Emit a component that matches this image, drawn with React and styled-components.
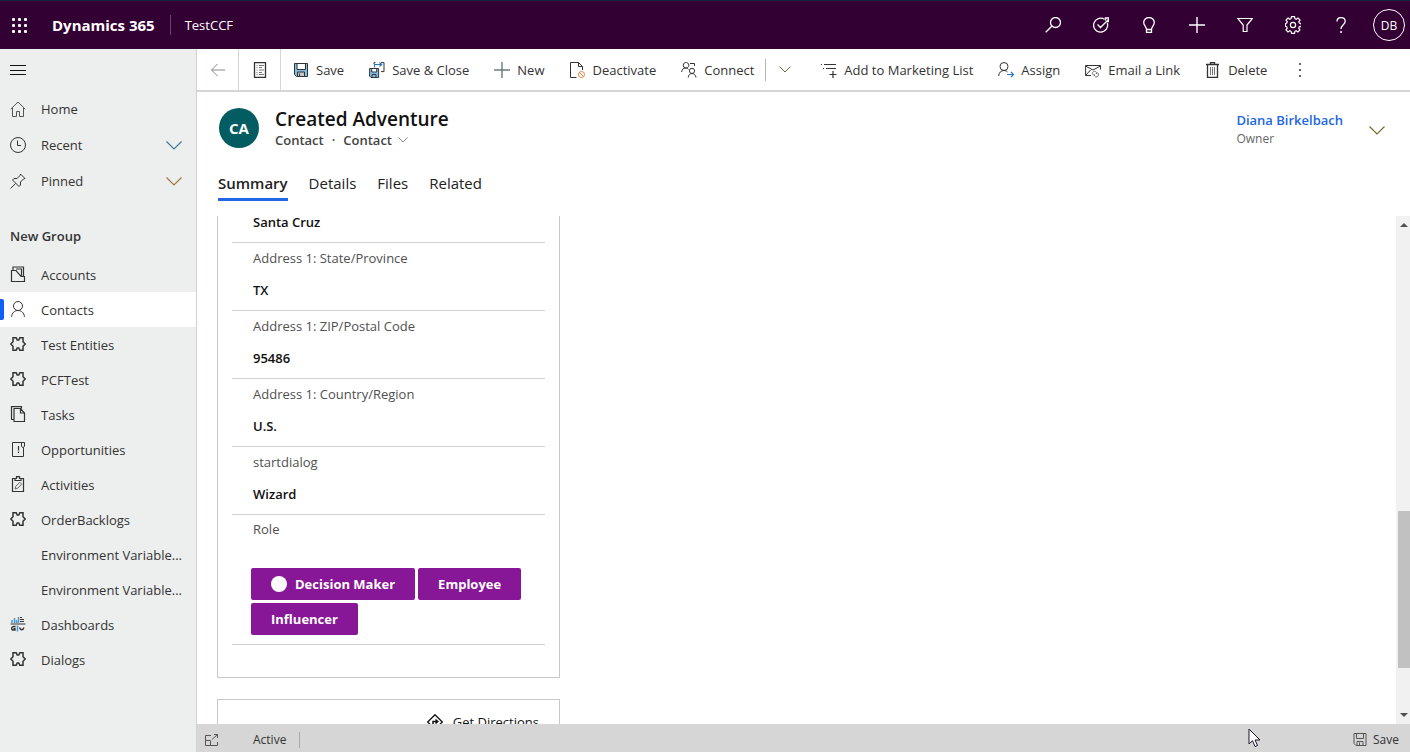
import React from 'react';
import styled, { createGlobalStyle, css } from 'styled-components';

const GlobalStyle = createGlobalStyle`
  *, *::before, *::after { box-sizing: border-box; }
  body { margin: 0; background: #fff; }
  body, button, input { font-family: "Open Sans", "Noto Sans", sans-serif; font-size: 13px; line-height: 20px; color: #333; }
  button { margin: 0; padding: 0; border: 0; background: none; cursor: pointer; white-space: nowrap; }
  a { color: inherit; text-decoration: none; }
  h1, h2, p, ul { margin: 0; padding: 0; }
`;

/* ---------- icons ---------- */

const Svg = styled.svg`
  display: block;
  flex: none;
  width: ${(p) => p.$w || 16}px;
  height: ${(p) => p.$h || 16}px;
  fill: none;
  stroke: currentColor;
  stroke-width: 1;
`;

function Icon({ name, w = 16, h = 16 }) {
  return (
    <Svg $w={w} $h={h} viewBox={`0 0 ${w} ${h}`} aria-hidden="true">
      {drawings[name]}
    </Svg>
  );
}

const floppy = (
  <>
    <path d="M1.5 1.5h13v13h-11l-2-2z" fill="#84bfe8" />
    <path d="M4 1.5h8.500v6H4z" fill="#fff" />
    <path d="M4.500 14.500v-4.500h7v4.500z" fill="#c8c8c8" />
    <path d="M6.500 11.500v3" />
  </>
);

const drawings = {
  waffle: (
    <g fill="#fff" stroke="none">
      {[0, 6, 12].map((y) => [0, 6, 12].map((x) => (
        <rect key={`${x}-${y}`} x={x + 1} y={y + 1} width="3" height="3" rx="1" />
      )))}
    </g>
  ),
  search: <><circle cx="10.500" cy="5.500" r="5" strokeWidth="1.300" /><path d="M7 9L.7 15.300" strokeWidth="1.300" /></>,
  target: <g strokeWidth="1.300"><path d="M11.500 2.300A7 7 0 1 0 14.300 6M4.500 7.500l3 3L15.500 2.500M12.500 3.500V1h3.500M13.500 4.500H16V1" /></g>,
  bulb: <g strokeWidth="1.300"><path d="M5.500 12.500C5.500 9.800 2.700 8.500 2.700 5.500a5.300 5 0 0 1 10.600 0c0 3-2.800 4.300-2.800 7zM5.500 12.500v3h5v-3" /></g>,
  plus: <path d="M8 0v16M0 8h16" strokeWidth="1.400" />,
  filter: <path d="M.8 1.500h14.600L10 8v6.500H6.200V8z" strokeWidth="1.200" />,
  gear: (
    <g strokeWidth="1.200">
      <path d="M6.500.700h3l.4 2 1.300.600 1.800-1.200 2 2-1.200 1.800.500 1.200 2 .500v2.800l-2 .400-.600 1.300 1.200 1.800-2 2-1.800-1.200-1.200.600-.400 2h-3l-.400-2-1.300-.600L3 15.900l-2-2 1.200-1.800-.500-1.300-1.200-.400V7.600l1.200-.500.600-1.200L1 4.100l2-2 1.800 1.200 1.200-.600z" />
      <circle cx="8" cy="9" r="2.600" />
    </g>
  ),
  help: <><path d="M4 4.500C4 2 5.500.700 8 .700s4.200 1.500 4.200 3.800C12.200 7.500 8 8.300 8 12" strokeWidth="1.300" /><circle cx="8" cy="15" r="1" fill="currentColor" stroke="none" /></>,
  menu: <path d="M0 3.500h16M0 8.500h16M0 12.500h16" stroke="#111" />,
  home: <path d="M.7 8.200L8 1l7.300 7.200M2.500 6.700v8.800h4v-5h3v5h4V6.700" stroke="#555" />,
  clock: <><circle cx="8" cy="8" r="7.500" /><path d="M7.500 3.500v5H11" /></>,
  pin: <path d="M10.500 1l4.500 4.500-1.500.500-3 3v3l-1.500 1.500-6.500-6.500L4 5.500h3l3-3zM5.500 10.500L.5 15.500" />,
  chevron: <path d="M.5.500l7.500 7.500L15.500.500" strokeWidth="1.200" />,
  chevronMid: <path d="M.5.500L6 6 11.500.500" />,
  chevronSmall: <path d="M.5.500L5 5 9.500.500" stroke="#888" />,
  accounts: <path d="M1.500 4.500v11h13v-5H11L6 4.500zM3 4.500V1h10.500v9.500M6 3h5.500v7.500" strokeWidth="1.200" />,
  contact: <path d="M8 9.500a4.500 4.500 0 1 0 0-9 4.500 4.500 0 0 0 0 9c-3.500 0-6 2.300-6.500 6.300M8 9.500c3.500 0 6 2.300 6.500 6.300" />,
  puzzle: <path d="M3 1.700h3.200l1 2.300h1.600l1-2.300H13v4.100L15.200 8 13 10.200v4.100H9.800l-1-2.300H7.200l-1 2.300H3v-4.100L.8 8 3 5.800z" strokeWidth="1.500" />,
  tasks: <path d="M4 13.500H1.500V.600h10v1.900M4 2.500h6.500l4 4.500v8.500H4zM10.500 2.500V7h4" strokeWidth="1.200" />,
  opportunities: <><path d="M11.500 1.500h-9v14h11v-9M11.500 1.500v3.500l1 1.500h1l1-1.500V1.500z" /><path d="M8.500 5v4.500M8.500 10.500V12" strokeWidth="1.200" /></>,
  activities: <><path d="M5 2.500H2.500v13h11v-13H11M5 4.500h6v-2H9.500V.600h-3v1.900H5z" strokeWidth="1.200" /><path d="M5 13l.800-2.700 4-4 1.900 1.900-4 4z" stroke="#666" /></>,
  dashboards: (
    <>
      <path d="M2 7V4M4.500 7V2M6.500 7V4M8.500 7V1M7.500 9.500V15.500" stroke="#4c94cc" strokeWidth="1.500" />
      <path d="M10 1.500h2M10 3.500h4M10 5.500h4M.5 8h15" />
      <path d="M5.500 10.500C2 10 .5 12.500 2.500 14H5v-1.500H3.500M9.500 11.500c1 3 3.500 3 4.500 0" strokeWidth="1.300" />
    </>
  ),
  back: <path d="M7.500 2L1.500 8l6 6M1.500 8H15" stroke="#888" />,
  form: <g><path d="M2.500.500h11v15h-11z" strokeWidth="1.300" /><path d="M4.500 3.500h1M7 3.500h5M4.500 5.500h1M7 5.500h3M4.500 8h1M7 8h5M4.500 10.500h1M7 10.500h3M4.500 12.500h1M7 12.500h5" stroke="#777" /></g>,
  save: floppy,
  saveClose: (
    <>
      <path d="M.6 6.500h9v9H2l-1.400-1.400z" fill="#84bfe8" />
      <path d="M2.700 6.500h5v3.500h-5z" fill="#fff" />
      <path d="M3 15.500v-3h4v3M5 2V.600H6.500M12 .600h3v9h-3" />
      <path d="M5.500 5.500v-3h7M10.500.500l2.200 2-2.200 2" stroke="#2e75b6" strokeWidth="1.200" />
    </>
  ),
  add: <path d="M8 0v16M0 8h16" stroke="#667d7d" strokeWidth="1.400" />,
  deactivate: (
    <>
      <path d="M7.500 15.500h-6V.500h8l4 4V8M9.500.500v4h4" />
      <circle cx="12.500" cy="12.500" r="3" stroke="#e0873a" /><path d="M10.500 10.500l4 4" stroke="#e0873a" />
    </>
  ),
  connect: <path d="M4.500 6a2.800 2.800 0 1 0 0-5.500 2.800 2.800 0 0 0 0 5.500c-2.300 0-3.500 1.500-3.900 4M4.500 6c1.400 0 2.300.5 3 1.500M11 11.500a2.600 2.600 0 1 0 0-5.200 2.600 2.600 0 0 0 0 5.200c-2.200 0-3.500 1.500-3.800 4M11 11.500c2.200 0 3.600 1.500 4 4M9 1.500h4.500V4" />,
  marketing: <path d="M0 2.500h1M3 2.500h12M2 6.500h1M5 6.500h10M12 9v7M8.500 12.500h7" strokeWidth="1.200" />,
  assign: <><path d="M6 8.500A4 4 0 1 0 6 .500a4 4 0 0 0 0 8c-3 0-5 2-5.400 5.500M6 8.500c1.500 0 2.600.5 3.500 1.500" /><path d="M9 12.500h6.500M13 10l2.500 2.500L13 15" stroke="#2e75b6" strokeWidth="1.200" /></>,
  email: (
    <>
      <path d="M6 13.500H.6v-10h14.900v4M.6 4l7.400 4L15.500 4M.6 13.500L5.500 8" />
      <path d="M9.500 13.500a2.200 2.200 0 0 1-1-4c1.500-.8 3.500.5 3 2.500M12 10.500a2.200 2.200 0 1 1-1.500 4.300c-1.200-.600-1.300-2-.5-3" stroke="#777" />
    </>
  ),
  trash: <g><path d="M1 2.500h13M5.500 2V.600h4V2M2.500 2.500v13h10v-13" strokeWidth="1.300" /><path d="M5.500 5v8M7.500 5v8M9.500 5v8" stroke="#777" /></g>,
  more: <g fill="#666" stroke="none"><rect x="1" y="1" width="2" height="2" /><rect x="1" y="7" width="2" height="2" /><rect x="1" y="13" width="2" height="2" /></g>,
  directions: <><path d="M8 .700L15.300 8 8 15.300.7 8z" stroke="#111" strokeWidth="1.300" /><path d="M6 11.500V7.500h4.500M8.500 5.500l2.300 2-2.300 2" stroke="#111" strokeWidth="1.500" /></>,
  popout: <path d="M6 2.500H.5v10h12V9M.5 7.500h5v5M7 6.500l5.500-5M9 1.500h3.500V5" stroke="#555" />,
  saveOutline: <path d="M1 1.500h12v12H3l-2-2zM3.500 1.500v5h7v-5M4 13.500v-4h6v4M6.500 10.500v3" stroke="#555" />,
  pointer: <path d="M1 1v15l3.500-3.300L7 18.500l2.500-1L7 12h5z" fill="#fff" stroke="#201030" />,
  arrowUp: <path d="M0 5l4-4 4 4z" fill="#505050" stroke="none" />,
  arrowDown: <path d="M0 1l4 4 4-4z" fill="#505050" stroke="none" />,
};

/* ---------- shell ---------- */

const Page = styled.div`
  display: flex;
  flex-direction: column;
  height: 100vh;
  overflow: hidden;
`;

const TopBar = styled.header`
  display: flex;
  align-items: center;
  flex: none;
  height: 49px;
  padding-right: 5px;
  border-top: 1px solid #14213f;
  background: #330033;
  color: #fff;
`;

const TopButton = styled.button`
  display: flex;
  align-items: center;
  justify-content: center;
  width: 48px;
  height: 46px;
  color: #fff;
`;

const Launcher = styled(TopButton)`
  width: 38px;
`;

const Product = styled.a`
  margin-left: 14px;
  font-size: 15px;
  font-weight: 700;
  color: #fff;
`;

const AppName = styled.a`
  margin-left: 15px;
  padding: 1px 0 1px 14px;
  border-left: 1px solid #6b446b;
  line-height: 18px;
  color: #fff;
`;

const TopActions = styled.div`
  display: flex;
  margin-left: auto;
`;

const UserBadge = styled.button`
  width: 32px;
  height: 32px;
  margin-left: 8px;
  padding-top: 2px;
  border: 1px solid #fff;
  border-radius: 50%;
  font-size: 12px;
  color: #fff;
`;

const Body = styled.div`
  display: flex;
  flex: 1;
  min-height: 0;
`;

const Sidebar = styled.nav`
  flex: none;
  width: 197px;
  border-right: 1px solid #d2d2d2;
  background: #edefee;
`;

const MenuButton = styled.button`
  display: flex;
  align-items: center;
  width: 100%;
  height: 42px;
  padding-left: 10px;
`;

const NavLink = styled.a`
  position: relative;
  display: flex;
  align-items: center;
  gap: 15px;
  height: ${(p) => (p.$tall ? 36 : 35)}px;
  padding: 0 14px 0 10px;
  ${(p) => p.$active && css`
    background: #fff;
    &::before {
      content: "";
      position: absolute;
      left: 0;
      top: 7px;
      width: 4px;
      height: 21px;
      border-radius: 0 2px 2px 0;
      background: #1160f7;
    }
  `}
`;

const IconSlot = styled.span`
  flex: none;
  width: 16px;
  padding-bottom: 2px;
`;

const NavText = styled.span`
  flex: 1;
  overflow: hidden;
  text-overflow: ellipsis;
  white-space: nowrap;
`;

const Tint = styled.span`
  color: ${(p) => p.$color};
`;

const GroupTitle = styled.h2`
  margin: 19px 0 3px;
  padding-left: 10px;
  font-size: 13px;
  font-weight: 600;
  line-height: 36px;
`;

/* ---------- record ---------- */

const Main = styled.main`
  display: flex;
  flex: 1;
  flex-direction: column;
  min-width: 0;
`;

const CommandBar = styled.div`
  display: flex;
  flex: none;
  height: 43px;
  border-bottom: 2px solid #d6d6d6;
`;

const SquareCommand = styled.button`
  display: flex;
  align-items: center;
  justify-content: center;
  width: 42px;
  border-right: 1px solid #d6d6d6;
`;

const Commands = styled.div`
  display: flex;
  align-items: center;
  gap: 25px;
  padding-left: 12px;
`;

const Command = styled.button`
  display: flex;
  align-items: center;
  gap: 7px;
  height: 40px;
`;

const MoreCommand = styled(Command)`
  margin-left: 6px;
`;

const SplitCommand = styled.div`
  display: flex;
  align-items: center;
  margin-right: 5px;
`;

const SplitToggle = styled.button`
  display: flex;
  align-items: center;
  height: 22px;
  margin-left: 11px;
  padding-left: 13px;
  border-left: 1px solid #b5b5b5;
  color: #6b6b3a;
`;

const RecordHeader = styled.div`
  display: flex;
  align-items: flex-start;
  flex: none;
  height: 79px;
  padding: 16px 25px 0 22px;
`;

const RecordAvatar = styled.div`
  width: 40px;
  height: 40px;
  margin-right: 16px;
  border-radius: 50%;
  background: #035c61;
  color: #fff;
  font-size: 15px;
  font-weight: 700;
  line-height: 40px;
  text-align: center;
`;

const RecordTitle = styled.h1`
  font-size: 19px;
  font-weight: 600;
  line-height: 22px;
  color: #111;
`;

const RecordKind = styled.div`
  display: flex;
  align-items: center;
  gap: 8px;
  font-weight: 600;
  line-height: 20px;
  color: #444;
`;

const KindButton = styled.button`
  display: flex;
  align-items: center;
  gap: 6px;
  font-weight: 600;
  color: #444;
`;

const Owner = styled.div`
  margin-left: auto;
  padding-top: 2px;
`;

const OwnerLink = styled.a`
  display: block;
  font-weight: 600;
  color: #2266e3;
`;

const OwnerLabel = styled.div`
  font-size: 12px;
  line-height: 18px;
  color: #666;
`;

const HeaderToggle = styled.button`
  margin: 18px 0 0 26px;
  color: #7a6a2a;
`;

const Tabs = styled.div`
  display: flex;
  flex: none;
  gap: 21px;
  height: 45px;
  padding-left: 21px;
`;

const Tab = styled.button`
  height: 30px;
  padding-bottom: 4px;
  border-bottom: 3px solid ${(p) => (p.$active ? '#2266e3' : 'transparent')};
  font-size: 15px;
  font-weight: ${(p) => (p.$active ? 600 : 400)};
  color: #222;
`;

const Viewport = styled.div`
  display: flex;
  flex: 1;
  min-height: 0;
  overflow: hidden;
`;

const FormArea = styled.form`
  flex: 1;
  padding-left: 20px;
`;

const Card = styled.section`
  width: 343px;
  padding: 0 14px 32px;
  border: 1px solid #c8c8c8;
  ${(p) => p.$continued && css`border-top: 0;`}
  & + & { margin-top: 21px; }
`;

const Field = styled.div`
  display: flex;
  flex-direction: column;
  gap: 6px;
  padding: ${(p) => (p.$continued ? 0 : 5)}px 0 4px 21px;
  border-bottom: 1px solid #d2d2d2;
  ${(p) => p.$continued && css`margin-top: -10px;`}
`;

const FieldLabel = styled.label`
  height: 20px;
  color: #505050;
`;

const FieldInput = styled.input`
  width: 100%;
  height: 32px;
  padding: 0;
  border: 0;
  outline: 0;
  background: transparent;
  font-weight: 600;
  color: #111;
`;

const RoleField = styled.div`
  padding: 4px 0 9px 19px;
  border-bottom: 1px solid #d2d2d2;
`;

const RoleLabel = styled.div`
  padding-left: 2px;
  color: #505050;
`;

const RoleList = styled.div`
  display: flex;
  flex-wrap: wrap;
  gap: 3px;
  margin-top: 29px;
`;

const RoleButton = styled.button`
  display: flex;
  align-items: center;
  gap: 8px;
  height: 32px;
  padding: 0 20px;
  border-radius: 2px;
  background: #881798;
  font-weight: 700;
  color: #fff;
`;

const RoleDot = styled.span`
  width: 16px;
  height: 16px;
  border-radius: 50%;
  background: #fff;
`;

const DirectionsButton = styled.button`
  display: flex;
  align-items: center;
  gap: 10px;
  margin: 12px 6px 0 auto;
  color: #111;
`;

const ScrollTrack = styled.div`
  display: flex;
  flex-direction: column;
  align-items: flex-end;
  flex: none;
  width: 14px;
  background: #f1f1f1;
`;

const ScrollButton = styled.button`
  display: flex;
  align-items: center;
  justify-content: center;
  width: 12px;
  height: 18px;
`;

const ScrollGap = styled.div`
  flex: ${(p) => p.$grow} 1 0;
`;

const ScrollThumb = styled.div`
  flex: 157 1 0;
  width: 12px;
  background: #c1c1c1;
`;

const StatusBar = styled.footer`
  display: flex;
  align-items: center;
  flex: none;
  height: 28px;
  padding: 3px 11px 0 8px;
  background: #d6d6d6;
  font-size: 12px;
`;

const StatusText = styled.span`
  margin-left: 34px;
  padding-right: 13px;
  border-right: 1px solid #aaa;
  line-height: 16px;
`;

const StatusSave = styled.button`
  display: flex;
  align-items: center;
  gap: 6px;
  margin-left: auto;
  font-size: 12px;
`;

const Pointer = styled.div`
  position: fixed;
  right: 149px;
  bottom: 4px;
  pointer-events: none;
`;

/* ---------- data ---------- */

const topActions = [
  ['search', 'Search'],
  ['target', 'Task flows'],
  ['bulb', 'Assistant'],
  ['plus', 'Quick create'],
  ['filter', 'Advanced find'],
  ['gear', 'Settings'],
  ['help', 'Help'],
];

const navItems = [
  ['Accounts', 'accounts'],
  ['Contacts', 'contact'],
  ['Test Entities', 'puzzle'],
  ['PCFTest', 'puzzle'],
  ['Tasks', 'tasks'],
  ['Opportunities', 'opportunities'],
  ['Activities', 'activities'],
  ['OrderBacklogs', 'puzzle'],
  ['Environment Variable...', null],
  ['Environment Variable...', null],
  ['Dashboards', 'dashboards'],
  ['Dialogs', 'puzzle'],
];

const fields = [
  ['state', 'Address 1: State/Province', 'TX'],
  ['zip', 'Address 1: ZIP/Postal Code', '95486'],
  ['country', 'Address 1: Country/Region', 'U.S.'],
  ['dialog', 'startdialog', 'Wizard'],
];

function CommandItem({ icon, w, children }) {
  return (
    <Command type="button"><Icon name={icon} w={w} />{children}</Command>
  );
}

export default function App() {
  return (
    <Page>
      <GlobalStyle />
      <TopBar>
        <Launcher type="button" aria-label="App launcher"><Icon name="waffle" w={17} h={17} /></Launcher>
        <Product href="#home">Dynamics 365</Product>
        <AppName href="#app">TestCCF</AppName>
        <TopActions>
          {topActions.map(([icon, label]) => (
            <TopButton key={icon} type="button" aria-label={label}>
              <Icon name={icon} h={icon === 'gear' ? 18 : 16} w={16} />
            </TopButton>
          ))}
        </TopActions>
        <UserBadge type="button">DB</UserBadge>
      </TopBar>

      <Body>
        <Sidebar>
          <MenuButton type="button" aria-label="Toggle navigation"><Icon name="menu" /></MenuButton>
          <NavLink href="#home" $tall><Icon name="home" /><NavText>Home</NavText></NavLink>
          <NavLink href="#recent" $tall>
            <Icon name="clock" /><NavText>Recent</NavText>
            <Tint $color="#3d7a9c"><Icon name="chevron" h={9} /></Tint>
          </NavLink>
          <NavLink href="#pinned" $tall>
            <Icon name="pin" /><NavText>Pinned</NavText>
            <Tint $color="#a0783c"><Icon name="chevron" h={9} /></Tint>
          </NavLink>
          <GroupTitle>New Group</GroupTitle>
          {navItems.map(([label, icon], i) => (
            <NavLink key={i} href={`#nav-${i}`} $active={label === 'Contacts'}>
              <IconSlot>{icon && <Icon name={icon} />}</IconSlot>
              <NavText>{label}</NavText>
            </NavLink>
          ))}
        </Sidebar>

        <Main>
          <CommandBar>
            <SquareCommand type="button" aria-label="Back"><Icon name="back" /></SquareCommand>
            <SquareCommand type="button" aria-label="Open record set"><Icon name="form" /></SquareCommand>
            <Commands>
              <CommandItem icon="save">Save</CommandItem>
              <CommandItem icon="saveClose">Save &amp; Close</CommandItem>
              <CommandItem icon="add">New</CommandItem>
              <CommandItem icon="deactivate">Deactivate</CommandItem>
              <SplitCommand>
                <CommandItem icon="connect">Connect</CommandItem>
                <SplitToggle type="button" aria-label="More connect options"><Icon name="chevronMid" w={12} h={7} /></SplitToggle>
              </SplitCommand>
              <CommandItem icon="marketing">Add to Marketing List</CommandItem>
              <CommandItem icon="assign">Assign</CommandItem>
              <CommandItem icon="email">Email a Link</CommandItem>
              <CommandItem icon="trash">Delete</CommandItem>
              <MoreCommand type="button" aria-label="More commands"><Icon name="more" /></MoreCommand>
            </Commands>
          </CommandBar>

          <RecordHeader>
            <RecordAvatar>CA</RecordAvatar>
            <div>
              <RecordTitle>Created Adventure</RecordTitle>
              <RecordKind>
                <span>Contact</span><span>·</span>
                <KindButton type="button">Contact<Icon name="chevronSmall" w={10} h={6} /></KindButton>
              </RecordKind>
            </div>
            <Owner>
              <OwnerLink href="#owner">Diana Birkelbach</OwnerLink>
              <OwnerLabel>Owner</OwnerLabel>
            </Owner>
            <HeaderToggle type="button" aria-label="Expand header"><Icon name="chevron" h={9} /></HeaderToggle>
          </RecordHeader>

          <Tabs role="tablist">
            <Tab type="button" role="tab" aria-selected="true" $active>Summary</Tab>
            <Tab type="button" role="tab">Details</Tab>
            <Tab type="button" role="tab">Files</Tab>
            <Tab type="button" role="tab">Related</Tab>
          </Tabs>

          <Viewport>
            <FormArea>
              <Card $continued>
                <Field $continued>
                  <FieldInput aria-label="City" defaultValue="Santa Cruz" />
                </Field>
                {fields.map(([id, label, value]) => (
                  <Field key={id}>
                    <FieldLabel htmlFor={id}>{label}</FieldLabel>
                    <FieldInput id={id} defaultValue={value} />
                  </Field>
                ))}
                <RoleField role="group" aria-labelledby="role-label">
                  <RoleLabel id="role-label">Role</RoleLabel>
                  <RoleList>
                    <RoleButton type="button"><RoleDot />Decision Maker</RoleButton>
                    <RoleButton type="button">Employee</RoleButton>
                    <RoleButton type="button">Influencer</RoleButton>
                  </RoleList>
                </RoleField>
              </Card>
              <Card>
                <DirectionsButton type="button"><Icon name="directions" />Get Directions</DirectionsButton>
              </Card>
            </FormArea>
            <ScrollTrack>
              <ScrollButton type="button" aria-label="Scroll up"><Icon name="arrowUp" w={8} h={6} /></ScrollButton>
              <ScrollGap $grow={277} />
              <ScrollThumb />
              <ScrollGap $grow={38} />
              <ScrollButton type="button" aria-label="Scroll down"><Icon name="arrowDown" w={8} h={6} /></ScrollButton>
            </ScrollTrack>
          </Viewport>

          <StatusBar>
            <Icon name="popout" w={14} h={14} />
            <StatusText>Active</StatusText>
            <StatusSave type="button"><Icon name="saveOutline" w={14} h={15} />Save</StatusSave>
          </StatusBar>
        </Main>
      </Body>
      <Pointer><Icon name="pointer" w={13} h={20} /></Pointer>
    </Page>
  );
}
